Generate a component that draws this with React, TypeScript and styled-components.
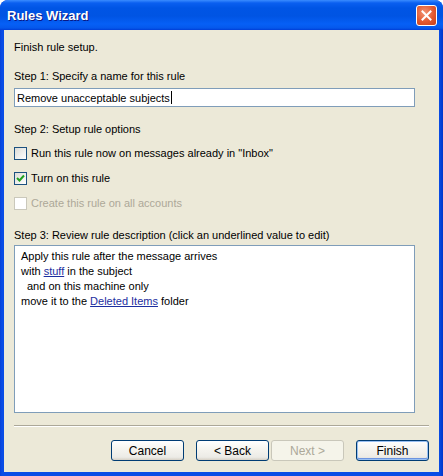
import styled, { createGlobalStyle } from "styled-components"

const GlobalStyle = createGlobalStyle`
  html, body {
    margin: 0;
    padding: 0;
    background: #ffffff;
  }
  body {
    font-family: "Liberation Sans", Arial, sans-serif;
    font-size: 11px;
    color: #000000;
  }
`;

const Window = styled.div`
  width: 443px;
  height: 476px;
  display: flex;
  flex-direction: column;
  border-radius: 8px 8px 0 0;
  overflow: hidden;
  background: #0a3bd8;
`;

const TitleBar = styled.div`
  height: 30px;
  flex-shrink: 0;
  display: flex;
  align-items: center;
  justify-content: space-between;
  padding: 0 6px 0 7px;
  background: linear-gradient(
    to bottom,
    #3a8cff 0px,
    #0a5ff0 3px,
    #0055e5 8px,
    #0054e3 16px,
    #0660f6 24px,
    #0558ec 28px,
    #003dd7 30px
  );
`;

const Title = styled.span`
  font-family: "Liberation Sans", Arial, sans-serif;
  font-weight: bold;
  font-size: 13px;
  color: #ffffff;
  text-shadow: 1px 1px 0 #0a1883;
  margin-top: 1px;
`;

const CloseButton = styled.div`
  width: 19px;
  height: 19px;
  border: 1px solid #ffffff;
  border-radius: 3px;
  display: flex;
  align-items: center;
  justify-content: center;
  background: radial-gradient(circle at 40% 35%, #f39576 0%, #e2582f 55%, #c7401a 100%);
  margin-top: 1px;
`;

const Frame = styled.div`
  flex: 1;
  display: flex;
  padding: 0 4px 4px 4px;
  background: linear-gradient(to right, #0842d7 0px, #0a4de6 2px, #0a4de6 439px, #0036c9 443px);
`;

const Client = styled.div`
  flex: 1;
  display: flex;
  flex-direction: column;
  background: #ece9d8;
  padding: 10px 24px 0 10px;
`;

const Label = styled.div<{ $top: number }>`
  height: 14px;
  line-height: 14px;
  margin-top: ${(p) => p.$top}px;
  white-space: nowrap;
`;

const TextField = styled.div`
  margin-top: 5px;
  height: 17px;
  border: 1px solid #7f9db9;
  background: #ffffff;
  display: flex;
  align-items: center;
  padding-left: 2px;
`;

const Caret = styled.span`
  display: inline-block;
  width: 1px;
  height: 13px;
  background: #000000;
  margin-left: 1px;
`;

const CheckList = styled.div`
  display: flex;
  flex-direction: column;
  gap: 11px;
  margin-top: 10px;
`;

const CheckRow = styled.div<{ $disabled?: boolean }>`
  height: 14px;
  display: flex;
  align-items: center;
  gap: 4px;
  color: ${(p) => (p.$disabled ? "#aca899" : "#000000")};
`;

const Box = styled.span<{ $disabled?: boolean }>`
  width: 11px;
  height: 11px;
  border: 1px solid ${(p) => (p.$disabled ? "#cac8bb" : "#1c5180")};
  background: ${(p) =>
    p.$disabled ? "#ffffff" : "linear-gradient(135deg, #dcdcd7 0%, #ffffff 100%)"};
  display: flex;
  align-items: center;
  justify-content: center;
  flex-shrink: 0;
`;

const Description = styled.div`
  margin-top: 3px;
  height: 163px;
  border: 1px solid #7f9db9;
  background: #ffffff;
  padding: 3px 0 0 6px;
  line-height: 15px;
`;

const Line = styled.div<{ $indent?: number }>`
  padding-left: ${(p) => p.$indent || 0}px;
`;

const Link = styled.span`
  color: #1c2ea0;
  text-decoration: underline;
`;

const Footer = styled.div`
  margin-right: -14px;
  display: flex;
  flex-direction: column;
`;

const Separator = styled.div`
  margin-top: 12px;
  height: 1px;
  background: #aca899;
  border-bottom: 1px solid #ffffff;
`;

const ButtonRow = styled.div`
  margin-top: 13px;
  display: flex;
  justify-content: flex-end;
`;

const Button = styled.div<{ $default?: boolean; $disabled?: boolean; $gap?: number }>`
  width: 73px;
  height: 21px;
  margin-left: ${(p) => p.$gap ?? 0}px;
  box-sizing: border-box;
  display: flex;
  align-items: center;
  justify-content: center;
  border-radius: 3px;
  border: 1px solid ${(p) => (p.$disabled ? "#c9c7ba" : "#003c74")};
  color: ${(p) => (p.$disabled ? "#aca899" : "#000000")};
  background: ${(p) =>
    p.$disabled
      ? "#f5f4ea"
      : "linear-gradient(to bottom, #ffffff 0%, #f6f5f0 40%, #ecebe6 85%, #d6d0c5 100%)"};
  box-shadow: ${(p) =>
    p.$default ? "inset 0 0 0 1px #99c0f2, inset 0 -1px 0 1px #6c94e0" : "none"};
  font-size: 12px;
`;

const Check = () => (
  <svg width="9" height="9" viewBox="0 0 9 9">
    <path d="M1 4 L3.5 6.5 L8 1.5" stroke="#21a121" strokeWidth="2" fill="none" />
  </svg>
);

const CloseX = () => (
  <svg width="11" height="11" viewBox="0 0 11 11">
    <path d="M1.5 1.5 L9.5 9.5 M9.5 1.5 L1.5 9.5" stroke="#ffffff" strokeWidth="2" strokeLinecap="square" />
  </svg>
);

export default function App() {
  return (
    <>
      <GlobalStyle />
      <Window>
        <TitleBar>
          <Title>Rules Wizard</Title>
          <CloseButton>
            <CloseX />
          </CloseButton>
        </TitleBar>
        <Frame>
          <Client>
            <Label $top={0}>Finish rule setup.</Label>
            <Label $top={15}>Step 1: Specify a name for this rule</Label>
            <TextField>
              Remove unacceptable subjects
              <Caret />
            </TextField>
            <Label $top={15}>Step 2: Setup rule options</Label>
            <CheckList>
              <CheckRow>
                <Box />
                Run this rule now on messages already in "Inbox"
              </CheckRow>
              <CheckRow>
                <Box>
                  <Check />
                </Box>
                Turn on this rule
              </CheckRow>
              <CheckRow $disabled>
                <Box $disabled />
                Create this rule on all accounts
              </CheckRow>
            </CheckList>
            <Label $top={18}>Step 3: Review rule description (click an underlined value to edit)</Label>
            <Description>
              <Line>Apply this rule after the message arrives</Line>
              <Line>
                with <Link>stuff</Link> in the subject
              </Line>
              <Line $indent={6}>and on this machine only</Line>
              <Line>
                move it to the <Link>Deleted Items</Link> folder
              </Line>
            </Description>
            <Footer>
              <Separator />
              <ButtonRow>
                <Button>Cancel</Button>
                <Button $gap={12}>&lt; Back</Button>
                <Button $gap={2} $disabled>
                  Next &gt;
                </Button>
                <Button $gap={12} $default>
                  Finish
                </Button>
              </ButtonRow>
            </Footer>
          </Client>
        </Frame>
      </Window>
    </>
  );
}
